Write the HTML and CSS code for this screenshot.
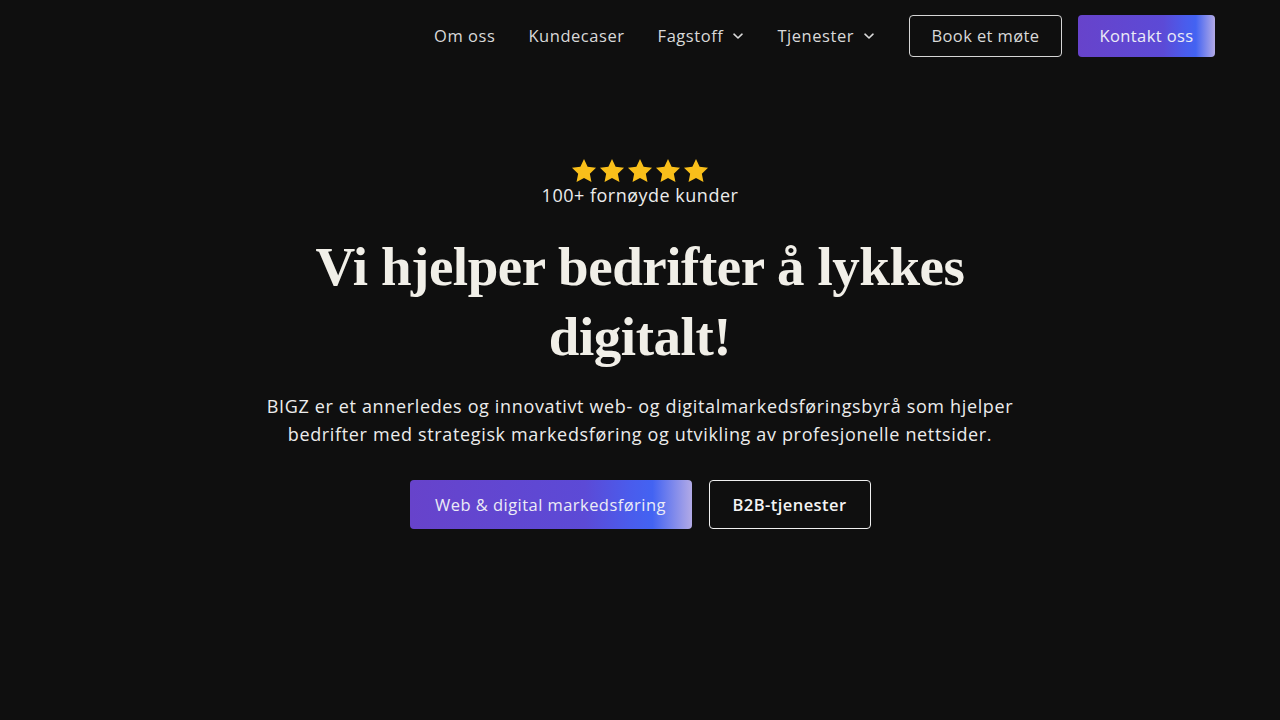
FILE: index.html
```html
<!DOCTYPE html>
<html lang="no">
<head>
<meta charset="utf-8">
<title>BIGZ</title>
<link rel="stylesheet" href="styles.css">
</head>
<body>
<header class="topbar">
  <nav class="nav">
    <a class="nav-link" href="#">Om oss</a>
    <a class="nav-link" href="#">Kundecaser</a>
    <a class="nav-link" href="#">Fagstoff <svg class="chev" viewBox="0 0 12 12" width="12" height="12"><path d="M2 4.2 L6 8 L10 4.2" fill="none" stroke="currentColor" stroke-width="1.6" stroke-linecap="round" stroke-linejoin="round"/></svg></a>
    <a class="nav-link" href="#">Tjenester <svg class="chev" viewBox="0 0 12 12" width="12" height="12"><path d="M2 4.2 L6 8 L10 4.2" fill="none" stroke="currentColor" stroke-width="1.6" stroke-linecap="round" stroke-linejoin="round"/></svg></a>
  </nav>
  <div class="actions">
    <a class="btn btn-outline btn-nav" href="#">Book et møte</a>
    <a class="btn btn-grad btn-nav" href="#">Kontakt oss</a>
  </div>
</header>
<main class="hero">
  <div class="stars">
    <svg viewBox="0 0 24 24" width="28" height="28"><path d="M12 1.8l3.1 6.6 7.2.9-5.3 5 1.4 7.1L12 17.9l-6.4 3.5 1.4-7.1-5.3-5 7.2-.9z" fill="#f9bf1a"/></svg>
    <svg viewBox="0 0 24 24" width="28" height="28"><path d="M12 1.8l3.1 6.6 7.2.9-5.3 5 1.4 7.1L12 17.9l-6.4 3.5 1.4-7.1-5.3-5 7.2-.9z" fill="#f9bf1a"/></svg>
    <svg viewBox="0 0 24 24" width="28" height="28"><path d="M12 1.8l3.1 6.6 7.2.9-5.3 5 1.4 7.1L12 17.9l-6.4 3.5 1.4-7.1-5.3-5 7.2-.9z" fill="#f9bf1a"/></svg>
    <svg viewBox="0 0 24 24" width="28" height="28"><path d="M12 1.8l3.1 6.6 7.2.9-5.3 5 1.4 7.1L12 17.9l-6.4 3.5 1.4-7.1-5.3-5 7.2-.9z" fill="#f9bf1a"/></svg>
    <svg viewBox="0 0 24 24" width="28" height="28"><path d="M12 1.8l3.1 6.6 7.2.9-5.3 5 1.4 7.1L12 17.9l-6.4 3.5 1.4-7.1-5.3-5 7.2-.9z" fill="#f9bf1a"/></svg>
  </div>
  <p class="rating">100+ fornøyde kunder</p>
  <h1 class="title">Vi hjelper bedrifter å lykkes<br>digitalt!</h1>
  <p class="lead">BIGZ er et annerledes og innovativt web- og digitalmarkedsføringsbyrå som hjelper<br>bedrifter med strategisk markedsføring og utvikling av profesjonelle nettsider.</p>
  <div class="cta">
    <a class="btn btn-grad btn-big" href="#">Web &amp; digital markedsføring</a>
    <a class="btn btn-outline btn-big btn-white" href="#">B2B-tjenester</a>
  </div>
</main>
</body>
</html>
```
FILE: styles.css
```css
* { box-sizing: border-box; }
html, body { margin: 0; padding: 0; }
body {
  background: #0f0f0f;
  color: #e6e6e6;
  font-family: "Open Sans", "Noto Sans", sans-serif;
  height: 720px;
  overflow: hidden;
}
a { text-decoration: none; color: inherit; }
.topbar {
  display: flex;
  justify-content: flex-end;
  align-items: center;
  height: 71px;
  padding: 0 65px 0 0;
}
.nav {
  display: flex;
  align-items: center;
  gap: 33px;
  margin-right: 34px;
}
.nav-link {
  font-size: 16.5px;
  letter-spacing: 0.55px;
  color: #d9d9d9;
  display: flex;
  align-items: center;
  gap: 9px;
}
.chev { color: #d9d9d9; }
.actions { display: flex; gap: 16px; }
.btn {
  display: inline-flex;
  align-items: center;
  justify-content: center;
  border-radius: 4px;
}
.btn-nav { height: 42px; font-size: 16.5px; letter-spacing: 0.4px; }
.btn-outline {
  border: 1px solid #d6d6d6;
  color: #d9d9d9;
  width: 153px;
}
.btn-grad {
  background: linear-gradient(90deg, #6743cb 0%, #5c4ad6 62%, #4a5cec 78%, #4363f2 86%, #b2aae6 100%);
  color: #ececf6;
  width: 137px;
}
.hero {
  display: flex;
  flex-direction: column;
  align-items: center;
  padding-top: 86px;
}
.stars { display: flex; gap: 0; height: 28px; }
.rating {
  margin: -2px 0 0;
  font-size: 18px;
  letter-spacing: 0.5px;
  color: #ececec;
}
.title {
  margin: 25px 0 0;
  font-family: "Liberation Serif", serif;
  font-weight: 700;
  font-size: 55px;
  line-height: 70px;
  text-align: center;
  color: #f1efe8;
  letter-spacing: -0.45px;
}
.lead {
  margin: 20px 0 0;
  font-size: 18px;
  letter-spacing: 0.65px;
  line-height: 28px;
  text-align: center;
  color: #ececec;
}
.cta { display: flex; gap: 17px; margin-top: 32px; }
.btn-big { height: 49px; font-size: 16.5px; letter-spacing: 0.45px; }
.cta .btn-grad { width: 282px; }
.cta .btn-white { width: 162px; border-color: #f0f0f0; color: #f4f4f4; font-weight: 600; }
```
